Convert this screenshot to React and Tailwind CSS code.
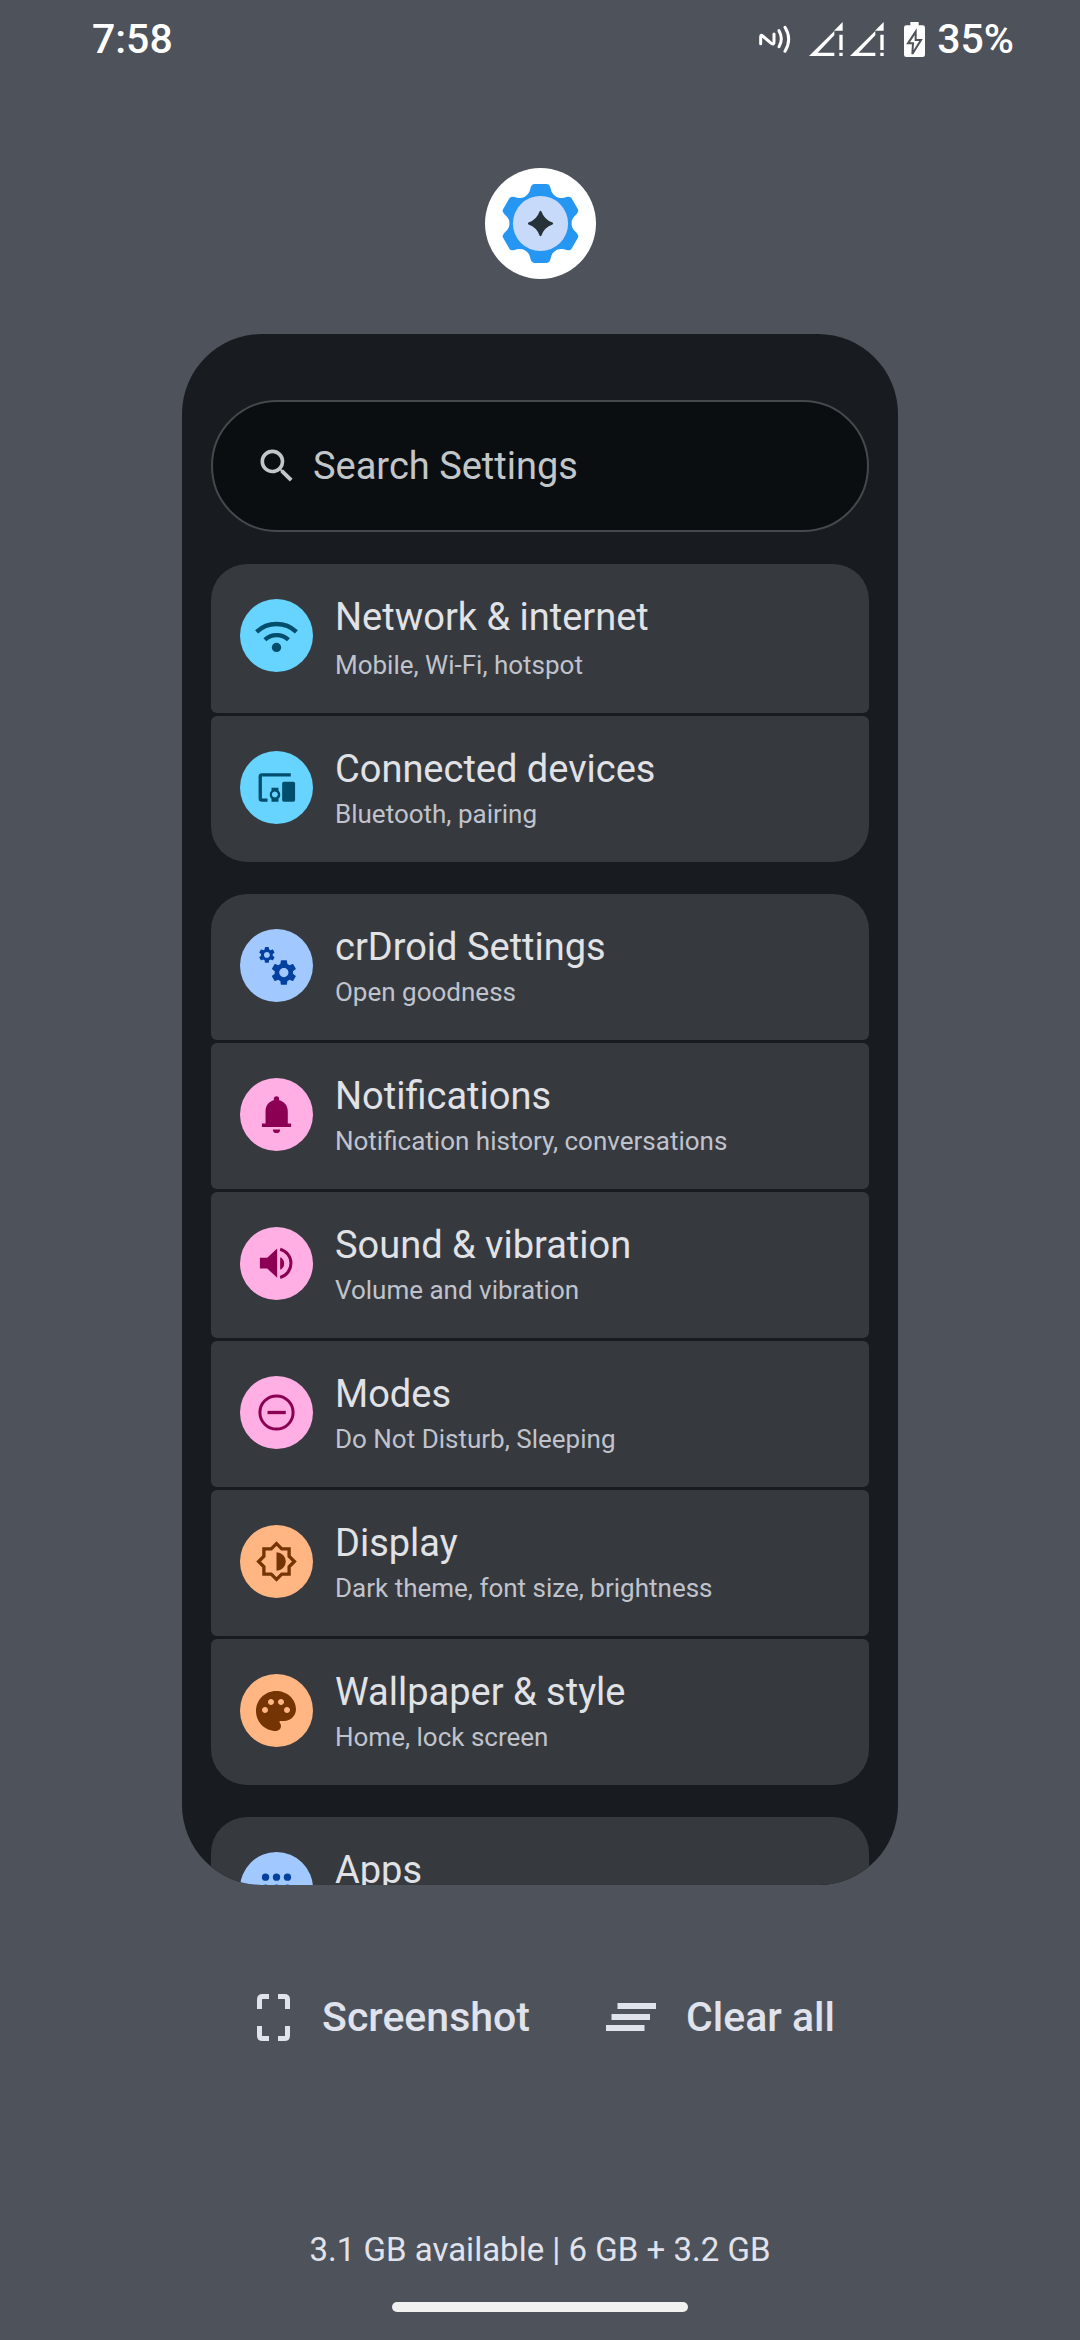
import React, { useState } from "react";
import { MdSearch, MdPalette } from "react-icons/md";
import clsx from "clsx";

const gearPath =
    "M19.14 12.94c.04-.3.06-.61.06-.94 0-.32-.02-.64-.07-.94l2.03-1.58a.49.49 0 0 0 .12-.61l-1.92-3.32a.488.488 0 0 0-.59-.22l-2.39.96c-.5-.38-1.03-.7-1.62-.94l-.36-2.54a.484.484 0 0 0-.48-.41h-3.84c-.24 0-.43.17-.47.41l-.36 2.54c-.59.24-1.13.57-1.62.94l-2.39-.96c-.22-.08-.47 0-.59.22L2.74 8.87c-.12.21-.08.47.12.61l2.03 1.58c-.05.3-.09.63-.09.94s.02.64.07.94l-2.03 1.58a.49.49 0 0 0-.12.61l1.92 3.32c.12.22.37.29.59.22l2.39-.96c.5.38 1.03.7 1.62.94l.36 2.54c.05.24.24.41.48.41h3.84c.24 0 .44-.17.47-.41l.36-2.54c.59-.24 1.13-.56 1.62-.94l2.39.96c.22.08.47 0 .59-.22l1.92-3.32c.12-.22.07-.47-.12-.61l-2.01-1.58zM12 15.6c-1.98 0-3.6-1.62-3.6-3.6s1.62-3.6 3.6-3.6 3.6 1.62 3.6 3.6-1.62 3.6-3.6 3.6z";

// Row glyphs are drawn on a 220 unit square that covers the whole round badge
function Glyph({ children }) {
    return (
        <svg viewBox="0 0 220 220" className="size-full" fill="currentColor" aria-hidden="true">
            {children}
        </svg>
    );
}

const WifiGlyph = () => (
    <Glyph>
        <path d="M50 99A88 88 0 0 1 170 99M75 123A51 51 0 0 1 146 123" fill="none" stroke="currentColor" strokeWidth="13" />
        <circle cx="110" cy="146" r="14" />
    </Glyph>
);

const DevicesGlyph = () => (
    <Glyph>
        <path d="M153 72H66Q61 72 61 77V143Q61 148 66 148H83" fill="none" stroke="currentColor" strokeWidth="10" />
        <rect x="127" y="93" width="39" height="60" rx="5" />
        <path d="M95 111h21v8a17 17 0 0 1 0 25v9h-21v-9a17 17 0 0 1 0-25zM105 122a9 9 0 1 0 .1 0z" fillRule="evenodd" />
    </Glyph>
);

const GearsGlyph = () => (
    <Glyph>
        <path d={gearPath} transform="translate(51.5 48.5) scale(2.46)" />
        <path d={gearPath} transform="translate(86 85) scale(3.85)" />
    </Glyph>
);

const BellGlyph = () => (
    <Glyph>
        <path d="M66 137h11V100c0-17 10-29 25-33v-4a8 8 0 0 1 16 0v4c15 4 26 16 26 33v37h10v11H66zM99 155h22a11 11 0 0 1-22 0z" />
    </Glyph>
);

const VolumeGlyph = () => (
    <Glyph>
        <path d="M60 93h22l30-28v88l-30-28H60zM121 91a21 21 0 0 1 0 38z" />
        <path d="M121 67a44 44 0 0 1 0 85" fill="none" stroke="currentColor" strokeWidth="9" />
    </Glyph>
);

const ModesGlyph = () => (
    <Glyph>
        <circle cx="110" cy="110" r="50" fill="none" stroke="currentColor" strokeWidth="9" />
        <rect x="83" y="105" width="55" height="10" />
    </Glyph>
);

const BrightnessGlyph = () => (
    <Glyph>
        <path d="M110 56l16 16h22v22l16 16-16 16v22h-22l-16 16-16-16H72v-22l-16-16 16-16V72h22z" fill="none" stroke="currentColor" strokeWidth="10" />
        <path d="M110 82a28 28 0 0 1 0 56z" />
    </Glyph>
);

const AppsGlyph = () => (
    <Glyph>
        {[76, 109, 142].map((y) => [77, 110, 143].map((x) => <circle key={`${x}-${y}`} cx={x} cy={y} r="11" />))}
    </Glyph>
);

const tones = {
    cyan: "bg-[#67d4ff] text-[#004e6c]",
    blue: "bg-[#a1c9ff] text-[#04409f]",
    pink: "bg-[#ffafe4] text-[#8c0053]",
    orange: "bg-[#ffb683] text-[#753403]",
};

const groups = [
    [
        { title: "Network & internet", summary: "Mobile, Wi-Fi, hotspot", tone: "cyan", icon: <WifiGlyph />, roomy: true },
        { title: "Connected devices", summary: "Bluetooth, pairing", tone: "cyan", icon: <DevicesGlyph /> },
    ],
    [
        { title: "crDroid Settings", summary: "Open goodness", tone: "blue", icon: <GearsGlyph /> },
        { title: "Notifications", summary: "Notification history, conversations", tone: "pink", icon: <BellGlyph /> },
        { title: "Sound & vibration", summary: "Volume and vibration", tone: "pink", icon: <VolumeGlyph /> },
        { title: "Modes", summary: "Do Not Disturb, Sleeping", tone: "pink", icon: <ModesGlyph /> },
        { title: "Display", summary: "Dark theme, font size, brightness", tone: "orange", icon: <BrightnessGlyph /> },
        { title: "Wallpaper & style", summary: "Home, lock screen", tone: "orange", icon: <MdPalette size={48} aria-hidden="true" /> },
    ],
    [{ title: "Apps", tone: "blue", icon: <AppsGlyph /> }],
];

function SignalIcon() {
    return (
        <svg viewBox="0 0 102 102" className="size-[34px]" fill="currentColor" aria-hidden="true">
            <path d="M101 0v26H75zM0 102L76 27v13L26 92h50v10zM91 38h10v46H91zM91 92h10v10H91z" />
        </svg>
    );
}

function StatusBar() {
    return (
        <header className="w-full h-[78px] pl-[92px] pr-[66px] flex items-center justify-between text-white text-[41px] leading-12 font-medium">
            <time>7:58</time>
            <div className="flex items-center">
                <svg viewBox="0 0 96 84" className="w-8 h-7 mr-[18px]" fill="none" stroke="currentColor" strokeWidth="9" strokeLinecap="round" aria-hidden="true">
                    <path d="M5 56V36q0-8 6-3l26 22q8 6 8-4V27" />
                    <path d="M60 17q14 24 0 48M78 7q22 36 0 72" />
                </svg>
                <div className="flex gap-[7px] mr-5">
                    <SignalIcon />
                    <SignalIcon />
                </div>
                <svg viewBox="0 0 63 105" className="w-[21px] h-[35px] mr-3" aria-hidden="true">
                    <path d="M19 0h25v10h12q7 0 7 7v81q0 7-7 7H7q-7 0-7-7V17q0-7 7-7h12z" fill="currentColor" />
                    <path d="M35 29L12 64h15l-2 32 26-42H35z" fill="currentColor" stroke="#4e525a" strokeWidth="6" />
                </svg>
                <span>35%</span>
            </div>
        </header>
    );
}

function AppIcon() {
    return (
        <svg viewBox="-167 -167 334 334" className="size-[111px]" role="img" aria-label="Settings">
            <circle r="167" fill="#fff" />
            <g fill="#2696f3" stroke="#2696f3" strokeWidth="6" strokeLinejoin="round">
                {[0, 60, 120, 180, 240, 300].map((angle) => (
                    <path
                        key={angle}
                        transform={`rotate(${angle})`}
                        d="M0 0L-45 -78Q-34 -85 -30 -96L-26 -110Q-24 -116 -19 -116H19Q24 -116 26 -110L30 -96Q34 -85 45 -78Z"
                    />
                ))}
            </g>
            <circle r="83" fill="#c8daf9" />
            <path d="M0-35Q9-9 35 0Q9 9 0 35Q-9 9-35 0Q-9-9 0-35Z" fill="#263238" stroke="#263238" strokeWidth="6" strokeLinejoin="round" />
        </svg>
    );
}

function SettingRow({ item, first, last }) {
    return (
        <li>
            <button
                type="button"
                className={clsx(
                    "w-full flex items-start gap-[22px] px-[29px] pt-7 pb-[30px] bg-[#36393e] text-left",
                    first ? "rounded-t-[36px]" : "rounded-t-[6px]",
                    last ? "rounded-b-[36px]" : "rounded-b-[6px]"
                )}
            >
                <span className={clsx("size-[73px] mt-[7px] shrink-0 rounded-full flex items-center justify-center", tones[item.tone])}>
                    {item.icon}
                </span>
                <span className="min-w-0 flex flex-col">
                    <span className="text-[38px] leading-[50px] text-[#e1e2e6]">{item.title}</span>
                    {item.summary && (
                        <span className={clsx("text-[26px] leading-9 text-[#c0c3cc]", item.roomy ? "mt-[5px]" : "mt-0.5")}>
                            {item.summary}
                        </span>
                    )}
                </span>
            </button>
        </li>
    );
}

export default function App() {
    const [query, setQuery] = useState("");

    return (
        <div className="min-h-screen flex flex-col items-center bg-[#4e525a] font-['Roboto',sans-serif]">
            <StatusBar />

            <div className="mt-[90px]">
                <AppIcon />
            </div>

            {/* Recent app preview */}
            <main className="mt-[55px] w-[66.3%] aspect-[716/1551] overflow-hidden rounded-[80px] bg-[#181b20] px-[29px] pt-[66px] flex flex-col gap-8">
                <label className="shrink-0 h-[132px] rounded-full border-2 border-[#45484c] bg-[#0a0e11] pl-[42px] pr-8 flex items-center gap-[14px] text-[#c3c6c9]">
                    <MdSearch size={44} className="shrink-0" aria-hidden="true" />
                    <input
                        type="text"
                        aria-label="Search Settings"
                        placeholder="Search Settings"
                        value={query}
                        onChange={(e) => setQuery(e.target.value)}
                        className="min-w-0 flex-1 bg-transparent text-[38px] leading-[50px] outline-none placeholder:text-[#c3c6c9]"
                    />
                </label>

                {groups.map((group, index) => (
                    <ul key={index} className="flex flex-col gap-[3px]">
                        {group.map((item, i) => (
                            <SettingRow key={item.title} item={item} first={i === 0} last={i === group.length - 1} />
                        ))}
                    </ul>
                ))}
            </main>

            <div className="mt-[101px] pl-3 flex justify-center gap-[76px] text-[#e0e2ec] text-[41px] leading-[62px] font-medium">
                <button type="button" className="flex items-center gap-8">
                    <svg viewBox="0 0 66 94" className="w-[33px] h-[47px]" fill="none" stroke="currentColor" strokeWidth="10" aria-hidden="true">
                        <path d="M5 30V11q0-6 6-6H24M42 5h13q6 0 6 6V30M5 64v19q0 6 6 6H24M42 89h13q6 0 6-6V64" />
                    </svg>
                    Screenshot
                </button>
                <button type="button" className="flex items-center gap-[30px]">
                    <svg viewBox="0 0 100 56" className="w-[50px] h-7" fill="currentColor" aria-hidden="true">
                        <path d="M23 0H100v12H23zM11 22H88v12H11zM0 44H77v12H0z" />
                    </svg>
                    Clear all
                </button>
            </div>

            <footer className="mt-auto pb-7 flex flex-col items-center gap-8">
                <p className="text-[33px] leading-10 text-[#e0e2ec]">3.1 GB available | 6 GB + 3.2 GB</p>
                <div className="w-[296px] h-2.5 rounded-full bg-[#f1f1f0]" />
            </footer>
        </div>
    );
}
